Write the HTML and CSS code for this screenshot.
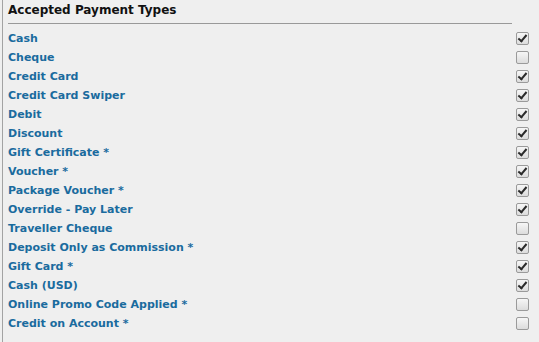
FILE: index.html
```html
<!DOCTYPE html>
<html lang="en">
<head>
  <meta charset="UTF-8">
  <title>Accepted Payment Types</title>
  <link rel="stylesheet" href="styles.css">
</head>
<body>
  <div class="panel">
    <h2 class="panel-title">Accepted Payment Types</h2>
    <ul class="pay-list">
      <li><span>Cash</span><i class="cb on"></i></li>
      <li><span>Cheque</span><i class="cb"></i></li>
      <li><span>Credit Card</span><i class="cb on"></i></li>
      <li><span>Credit Card Swiper</span><i class="cb on"></i></li>
      <li><span>Debit</span><i class="cb on"></i></li>
      <li><span>Discount</span><i class="cb on"></i></li>
      <li><span>Gift Certificate *</span><i class="cb on"></i></li>
      <li><span>Voucher *</span><i class="cb on"></i></li>
      <li><span>Package Voucher *</span><i class="cb on"></i></li>
      <li><span>Override - Pay Later</span><i class="cb on"></i></li>
      <li><span>Traveller Cheque</span><i class="cb"></i></li>
      <li><span>Deposit Only as Commission *</span><i class="cb on"></i></li>
      <li><span>Gift Card *</span><i class="cb on"></i></li>
      <li><span>Cash (USD)</span><i class="cb on"></i></li>
      <li><span>Online Promo Code Applied *</span><i class="cb"></i></li>
      <li><span>Credit on Account *</span><i class="cb"></i></li>
    </ul>
  </div>
</body>
</html>
```

FILE: styles.css
```css
body {
  margin: 0;
  background: #efefef;
  font-family: "DejaVu Sans", Verdana, sans-serif;
}
.panel {
  margin-left: 2px;
  border-left: 1px solid #a3a3a3;
  padding: 2px 10px 0 5px;
  height: 340px;
}
.panel-title {
  margin: 0 17px 0 0;
  padding-bottom: 4px;
  border-bottom: 1px solid #999;
  font-size: 12px;
  line-height: 17px;
  color: #111;
}
.pay-list {
  list-style: none;
  margin: 5px 0 0;
  padding: 0;
}
.pay-list li {
  display: flex;
  align-items: center;
  justify-content: space-between;
  height: 19px;
  font-size: 11px;
  font-weight: bold;
  color: #1a6b9e;
}
.cb {
  position: relative;
  width: 11px;
  height: 11px;
  border: 1px solid #9a9a9a;
  border-radius: 2px;
  background: linear-gradient(#f6f6f6, #dcdcdc);
}
.cb.on::after {
  content: "";
  position: absolute;
  left: 3px;
  top: 0px;
  width: 3px;
  height: 7px;
  border: solid #2a2a2a;
  border-width: 0 2px 2px 0;
  transform: rotate(40deg);
}
```
